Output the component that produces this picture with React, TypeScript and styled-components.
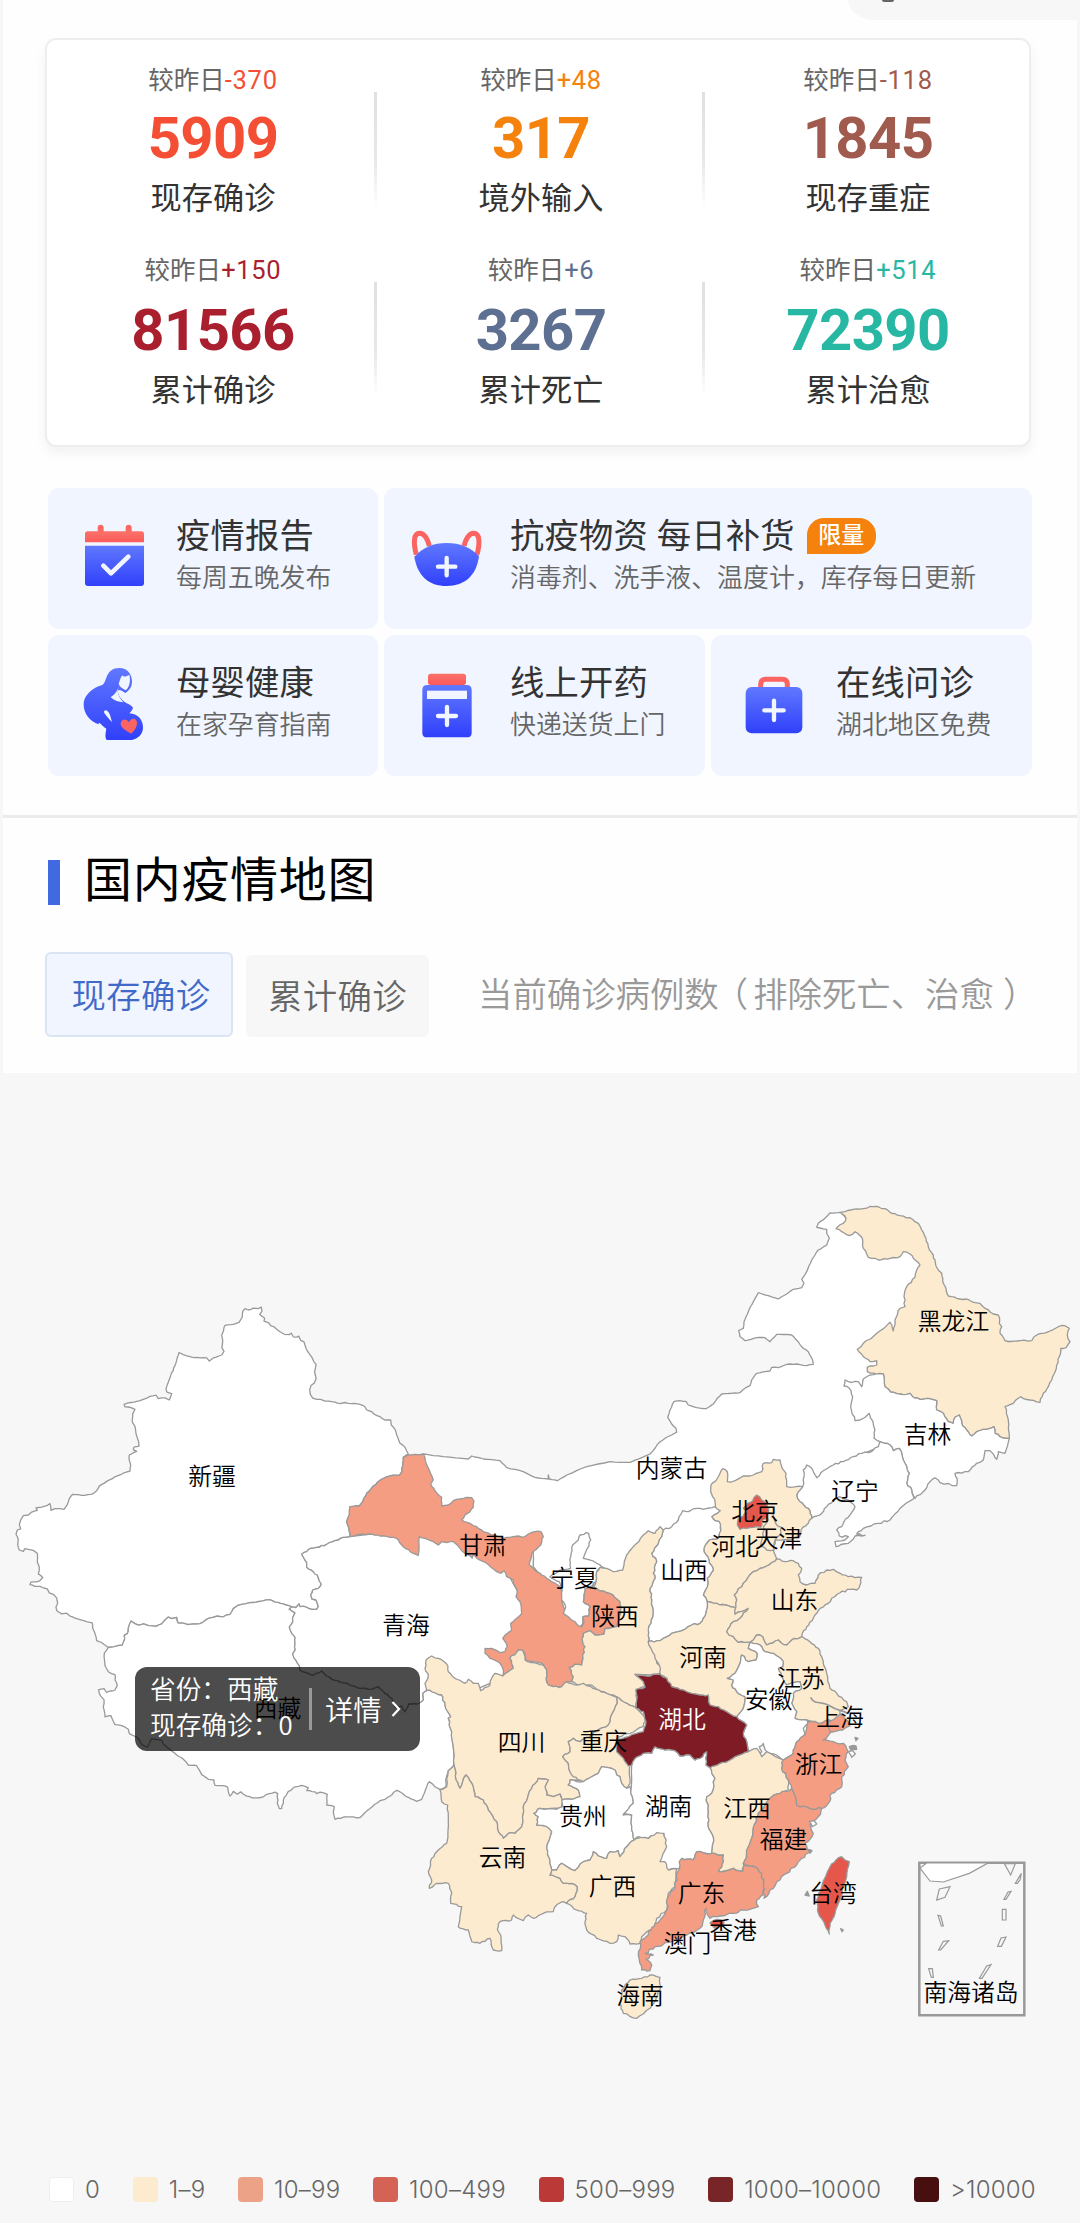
import React from 'react';
import styled, { createGlobalStyle } from 'styled-components';

const GlobalStyle = createGlobalStyle`
  * { box-sizing: border-box; }
  body {
    margin: 0;
    background: #f7f7f7;
    font-family: Roboto, "Noto Sans CJK SC", sans-serif;
    -webkit-font-smoothing: antialiased;
  }
`;

const Page = styled.main`
  width: 1080px;
  height: 2223px;
  overflow: hidden;
  display: flex;
  flex-direction: column;
  background: #f7f7f7;
`;

const Sheet = styled.section`
  margin: 0 3px;
  height: 1073px;
  background: #fefefe;
  display: flex;
  flex-direction: column;
`;

const TopBar = styled.div`
  height: 38px;
  display: flex;
  justify-content: flex-end;
  align-items: flex-start;
`;

const SharePill = styled.div`
  width: 229px;
  height: 20px;
  background: #f7f7f7;
  border-bottom-left-radius: 28px 20px;
  display: flex;
  padding-left: 34px;
`;

const ShareDot = styled.span`
  width: 12px;
  height: 2px;
  background: #666;
  border-radius: 0 0 6px 6px;
`;

const StatsCard = styled.div`
  margin: 0 46px 0 42px;
  width: 986px;
  height: 409px;
  border: 2px solid #eeeeee;
  border-radius: 11px;
  background: #fff;
  box-shadow: 0 6px 12px rgba(0, 0, 0, 0.05);
  padding: 22px 0 0 2px;
  display: flex;
  flex-direction: column;
`;

const StatsRow = styled.div<{ $gap: number }>`
  display: grid;
  grid-template-columns: 328px 328px 326px;
  height: 190px;
  --gap: ${(p) => p.$gap}px;
`;

const Stat = styled.div<{ $divider: boolean }>`
  display: flex;
  flex-direction: column;
  align-items: center;
  background: ${(p) =>
    p.$divider
      ? 'linear-gradient(#e0e0e0, #e8e8e8 60%, rgba(255,255,255,0)) right 30px / 3px 116px no-repeat'
      : 'none'};
`;

const StatDelta = styled.div<{ $color: string }>`
  height: 36px;
  line-height: 36px;
  font-size: 25.5px;
  color: #666;
  span { color: ${(p) => p.$color}; letter-spacing: 0.7px; }
`;

const StatNumber = styled.div<{ $color: string }>`
  height: 66px;
  line-height: 66px;
  margin-top: var(--gap);
  font-size: 58px;
  font-weight: 700;
  letter-spacing: -0.6px;
  color: ${(p) => p.$color};
`;

const StatName = styled.div`
  height: 44px;
  line-height: 44px;
  margin-top: 6px;
  font-size: 31.2px;
  color: #333;
`;

const Services = styled.div`
  margin: 41px 0 0 45px;
  width: 984px;
  display: flex;
  flex-direction: column;
  gap: 6px;
`;

const ServiceRow = styled.div<{ $columns: string }>`
  display: grid;
  grid-template-columns: ${(p) => p.$columns};
  gap: 6px;
`;

const Tile = styled.div<{ $inset: number; $gap: number }>`
  height: 141px;
  border-radius: 11px;
  background: #f0f5ff;
  display: flex;
  align-items: flex-start;
  gap: ${(p) => p.$gap}px;
  padding-left: ${(p) => p.$inset}px;
`;

const TileIcon = styled.svg`
  width: 72px;
  height: 72px;
  margin-top: 34px;
  overflow: visible;
  flex: none;
`;

const TileText = styled.div`
  padding-top: 25px;
  white-space: nowrap;
`;

const TileTitle = styled.div`
  height: 46px;
  display: flex;
  align-items: center;
  font-size: 34.3px;
  letter-spacing: 0.2px;
  line-height: 46px;
  color: #333;
`;

const Badge = styled.span`
  width: 69px;
  height: 36px;
  margin: -1px 0 0 12px;
  border-radius: 17px 17px 17px 0;
  background: #f5820c;
  color: #fff;
  font-size: 23px;
  font-weight: 500;
  letter-spacing: 0;
  line-height: 35px;
  text-align: center;
`;

const TileNote = styled.div`
  font-size: 25.9px;
  line-height: 38px;
  font-weight: 350;
  color: #666;
`;

const Rule = styled.div`
  margin-top: 39px;
  height: 3px;
  background: #ebebeb;
`;

const Heading = styled.h2`
  margin: 33px 0 0 45px;
  height: 60px;
  display: flex;
  align-items: center;
  gap: 24px;
  font-size: 48px;
  letter-spacing: 0.7px;
  font-weight: 400;
  line-height: 60px;
  color: #000;
  &::before {
    content: "";
    width: 12px;
    height: 45px;
    margin-top: 3px;
    background: #4169e1;
  }
`;

const Tabs = styled.div`
  margin: 41px 0 0 42px;
  height: 85px;
  display: flex;
  align-items: flex-end;
`;

const Tab = styled.button<{ $active?: boolean }>`
  width: ${(p) => (p.$active ? 188 : 183)}px;
  height: ${(p) => (p.$active ? 85 : 82)}px;
  margin-right: 13px;
  padding: ${(p) => (p.$active ? '0 0 3px 4px' : '0 0 5px')};
  border: ${(p) => (p.$active ? '2px solid #dbe4f3' : 'none')};
  border-radius: 6px;
  background: ${(p) => (p.$active ? '#f0f5ff' : '#f7f7f7')};
  color: ${(p) => (p.$active ? '#4169c8' : '#666')};
  font: inherit;
  font-weight: 350;
  font-size: 34.4px;
  letter-spacing: 0.3px;
`;

const TabNote = styled.div`
  margin-left: 36px;
  height: 85px;
  line-height: 87px;
  font-size: 34.4px;
  font-weight: 350;
  color: #999;
  white-space: nowrap;
`;

const Bracket = styled.span<{ $shift: number }>`
  margin-left: ${(p) => p.$shift}px;
  margin-right: ${(p) => -p.$shift}px;
`;

const MapArea = styled.section`
  height: 1087px;
  display: grid;
  > * { grid-area: 1 / 1; }
`;

const MapDrawing = styled.svg`
  width: 1080px;
  height: 1087px;
  display: block;
  text {
    font-family: "Noto Sans CJK SC", sans-serif;
    font-size: 23.8px;
    font-weight: 350;
    text-anchor: middle;
  }
`;

const Tooltip = styled.div`
  margin: 594px 0 0 135px;
  width: 285px;
  height: 84px;
  border-radius: 12px;
  background: rgba(0, 0, 0, 0.7);
  color: #fff;
  display: flex;
  align-items: center;
  padding-left: 15px;
  font-size: 25.7px;
  font-weight: 350;
  font-family: "Noto Sans CJK SC", sans-serif;
  white-space: nowrap;
`;

const TooltipLines = styled.div`
  width: 159px;
  line-height: 36px;
  padding-bottom: 6px;
`;

const TooltipLink = styled.div`
  height: 42px;
  line-height: 40px;
  display: flex;
  align-items: center;
  gap: 9px;
  padding-left: 13px;
  border-left: 3px solid #999;
  font-size: 28.3px;
`;

const Legend = styled.footer`
  height: 58px;
  padding: 0 44px 0 49px;
  display: flex;
  align-items: center;
  justify-content: space-between;
`;

const LegendItem = styled.div`
  display: flex;
  align-items: center;
  gap: 11px;
  font-family: Inter, sans-serif;
  font-size: 24px;
  font-weight: 300;
  letter-spacing: 0.25px;
  color: #666;
`;

const Swatch = styled.i<{ $color: string; $ring?: boolean }>`
  width: 25px;
  height: 25px;
  border-radius: 4px;
  background: ${(p) => p.$color};
  border: ${(p) => (p.$ring ? '1px solid #eeeeee' : 'none')};
`;

/* ---------- data ---------- */

const STATS = [
  [
    { delta: '-370', value: '5909', name: '现存确诊', color: '#f44f34' },
    { delta: '+48', value: '317', name: '境外输入', color: '#f5820c' },
    { delta: '-118', value: '1845', name: '现存重症', color: '#a05a4e' },
  ],
  [
    { delta: '+150', value: '81566', name: '累计确诊', color: '#aa1f2e' },
    { delta: '+6', value: '3267', name: '累计死亡', color: '#5d7092' },
    { delta: '+514', value: '72390', name: '累计治愈', color: '#28b7a3' },
  ],
];

const LEGEND = [
  { color: '#ffffff', label: '0' },
  { color: '#fcebcf', label: '1–9' },
  { color: '#eba287', label: '10–99' },
  { color: '#d56355', label: '100–499' },
  { color: '#bb3937', label: '500–999' },
  { color: '#772526', label: '1000–10000' },
  { color: '#480f10', label: '>10000' },
];

/* ---------- map geometry ---------- */

// Outlines are digitised on six overlapping tiles: [origin x, origin y, units per px in x, in y].
const TILES = {
  A: [0, 1280, 3, 2.8],
  B: [300, 1400, 3, 3],
  C: [600, 1180, 3, 3],
  D: [600, 1440, 3, 3],
  E: [380, 1640, 3, 3],
  F: [600, 1680, 3, 3],
} as const;
type TileKey = keyof typeof TILES;
type Segment = [TileKey, string];
type Point = [number, number];

const hash = (n: number) => {
  const s = Math.sin(n * 12.9898) * 43758.5453;
  return s - Math.floor(s) - 0.5;
};

// Roughen an edge symmetrically, so neighbours that share it get the same coastline.
const roughen = (a: Point, b: Point, amount: number): Point[] => {
  const len = Math.hypot(b[0] - a[0], b[1] - a[1]);
  if (len < 4 || len > 40) return [];
  const steps = Math.min(4, Math.floor(len / 2.6));
  const flip = a[0] > b[0] || (a[0] === b[0] && a[1] > b[1]);
  const [p, q] = flip ? [b, a] : [a, b];
  const nx = -(q[1] - p[1]) / len;
  const ny = (q[0] - p[0]) / len;
  const out: Point[] = [];
  for (let i = 1; i < steps; i++) {
    const t = i / steps;
    const d = hash(Math.round(p[0] * 3 + q[1] * 7 + i * 31)) * amount;
    out.push([p[0] + (q[0] - p[0]) * t + nx * d, p[1] + (q[1] - p[1]) * t + ny * d]);
  }
  return flip ? out.reverse() : out;
};

const outline = (segments: Segment[], amount = 1.8): string => {
  const pts: Point[] = [];
  segments.forEach(([key, text]) => {
    const [ox, oy, sx, sy] = TILES[key];
    const n = text.trim().split(/\s+/).map(Number);
    for (let i = 0; i + 1 < n.length; i += 2) pts.push([ox + n[i] / sx, oy + n[i + 1] / sy]);
  });
  const all: Point[] = [];
  pts.forEach((p, i) => {
    all.push(p, ...roughen(p, pts[(i + 1) % pts.length], amount));
  });
  return 'M' + all.map(([x, y]) => `${x.toFixed(1)} ${y.toFixed(1)}`).join('L') + 'Z';
};

const NONE = '#ffffff';
const FEW = '#fcebcf';
const SOME = '#f59d82';
const MANY = '#e5574b';
const MOST = '#7f1b24';

const PROVINCES: { fill: string; rough?: number; shape: Segment[] }[] = [
  // 新疆
  { fill: NONE, rough: 0.7, shape: [
    ['A', '728 88 735 80 745 84 760 79 775 80 784 76 786 87 779 97 788 103 794 107 792 115 806 120 812 128 822 131 830 138 840 145 853 152 868 153 874 149 880 159 891 160 896 157 902 169 912 173 914 180 918 191 926 204 936 217 942 230 948 236 944 255 948 277 943 288 933 295 929 307 931 320 938 331 950 334 962 334 975 339 1005 342 1020 346 1035 343 1055 346 1080 348'],
    ['B', '195 20 200 30 215 35 222 42 240 50 255 60 272 60 274 75 285 88 290 105 300 130 315 142 325 162 310 172 308 190 306 215 298 226 270 228 245 238 220 258 200 280 188 305 178 318 150 320 148 345 140 365 147 385 150 410 130 412 105 422 80 433 50 442 32 445 20 455 5 463 12 475 20 488 20 502 40 515 52 525 58 543 64 552 55 565 38 570 32 585 36 597 48 600 55 620 50 628 35 628 20 622 0 620'],
    ['A', '897 907 888 917 875 915 850 907 825 902 808 895 785 899 760 903 735 907 712 912 700 920 690 936 670 943 650 941 630 946 600 962 570 964 535 961 530 945 515 948 505 944 495 952 485 963 468 970 445 968 430 963 420 966 405 962 393 955 385 975 382 990 373 995 374 1005 366 1023 340 1027 325 1029 318 1024 305 1015 290 1010 285 990 278 975 277 960 262 957 240 951 225 947 210 941 200 933 185 935 170 925 168 915 173 905 170 890 160 880 148 876 142 865 120 858 105 858 90 853 93 846 110 845 120 842 128 833 115 823 118 805 112 790 112 765 100 757 85 754 75 752 70 760 58 756 53 740 55 728 48 712 52 700 62 697 58 685 62 672 70 660 85 658 95 650 112 645 108 638 125 636 140 632 150 626 153 645 165 640 180 640 192 642 200 632 208 612 218 600 235 601 255 603 280 598 290 590 298 577 320 564 345 551 370 541 390 535 392 520 388 505 388 490 410 480 400 475 402 468 417 465 415 450 408 430 405 410 397 398 398 375 405 362 395 358 375 355 372 348 385 344 410 340 430 334 450 326 468 322 475 332 495 330 508 336 515 318 500 313 498 305 512 268 525 240 530 225 537 203 550 209 575 216 600 218 620 218 628 227 640 218 665 210 672 200 666 190 668 172 665 155 675 127 700 124 718 118 727 103'],
  ] },
  // 西藏
  { fill: NONE, rough: 1.2, shape: [
    ['A', '325 1029 340 1027 366 1023 374 1005 373 995 382 990 385 975 393 955 405 962 420 966 430 963 445 968 468 970 485 963 495 952 505 944 515 948 530 945 535 961 570 964 600 962 630 946 650 941 670 943 690 936 700 920 712 912 735 907 760 903 785 899 808 895 825 902 850 907 875 915 868 922 885 932 878 945 878 958 868 972 876 990 885 1000 885 1020 886 1035 878 1047 888 1065 898 1080'],
    ['B', '0 810 25 820 38 826 65 813 80 828 95 838 130 848 150 855 180 865 205 868 235 860 255 880 275 895 285 920 305 918 315 935 325 912 350 912 370 900 368 880 385 870'],
    ['E', '165 158 185 165 195 195 212 230 205 235 215 275 220 320 222 375 205 392 200 408 198 440 180 448 165 440 148 425 140 440 133 460 125 478 110 484 85 472 50 451 35 465 15 478 0 482'],
    ['A', '1110 1480 1080 1505 1040 1503 1005 1510 1000 1490 1003 1475 980 1470 982 1440 960 1434 950 1438 945 1433 920 1430 925 1422 905 1415 885 1419 865 1432 852 1450 845 1480 838 1480 832 1465 833 1438 825 1434 800 1440 790 1447 765 1450 740 1445 722 1433 712 1440 700 1432 690 1445 683 1420 665 1416 645 1415 642 1400 625 1398 605 1385 590 1360 565 1358 550 1342 530 1330 510 1315 490 1300 485 1288 455 1285 442 1308 430 1303 410 1280 388 1270 385 1258 365 1248 345 1245 333 1220 315 1223 310 1195 312 1175 302 1165 296 1147 312 1144 320 1155 345 1148 352 1135 345 1120 345 1105 325 1097 315 1080 313 1045'],
  ] },
  // 内蒙古
  { fill: NONE, rough: 0.6, shape: [
    ['B', '370 162 430 170 505 177 515 168 550 177 600 182 620 203 670 215 705 232 745 237 745 225 748 237 772 242 800 225 860 200 930 185 990 187 1020 175 1050 162 1080 125'],
    ['C', '195 775 215 765 230 757 228 745 215 732 203 712 210 690 222 665 240 662 258 664 265 675 290 683 318 686 340 672 352 655 365 642 395 640 420 638 435 625 450 617 455 600 470 580 495 575 510 573 515 562 535 563 560 553 590 552 620 557 640 553 638 540 625 515 605 500 595 485 575 465 560 463 530 463 510 485 495 473 470 473 435 482 420 470 416 452 430 445 432 425 445 395 460 365 475 338 505 347 535 357 555 345 580 328 605 323 612 310 605 298 620 275 635 240 655 210 680 195 688 175 680 160 680 148 650 142 655 130 675 115 690 99 722 97 738 115 780 140 850 200 930 190 985 250 985 330 940 420 880 500 850 560 850 640 850 760 840 800 700 860 620 960 345 1000 190 1070 130 1110'],
    ['B', '1000 480 970 515 935 515 905 500 850 620 780 600 700 500 700 450 600 440 450 360 350 200'],
  ] },
  // 青海
  { fill: NONE, shape: [
    ['B', '150 410 130 412 105 422 80 433 50 442 32 445 20 455 5 463 12 475 20 488 20 502 40 515 52 525 58 543 64 552 55 565 38 570 32 585 36 597 48 600 55 620 50 628 35 628 20 622 0 620'],
    ['A', '897 907 888 917 875 915 868 922 885 932 878 945 878 958 868 972 876 990 885 1000 885 1020 886 1035 878 1047 888 1065 898 1080'],
    ['B', '0 810 25 820 38 826 65 813 80 828 95 838 130 848 150 855 180 865 205 868 235 860 255 880 275 895 285 920 305 918 315 935 325 912 350 912 370 900 368 880 385 870 500 880 640 820 690 640 600 480 400 380'],
  ] },
  // 甘肃
  { fill: SOME, rough: 1.2, shape: [
    ['B', '325 165 345 163 370 162 383 200 400 240 392 252 405 272 425 292 425 318 445 315 460 302 480 297 500 292 515 293 522 303 520 322 510 335 495 345 485 360 510 370 530 380 550 395 580 405 610 415 640 410 655 408 670 412 685 402 705 395 723 395 730 410 722 435 695 462 688 495 700 505 725 525 740 535 755 545 780 560 790 590 785 605 797 635 820 660 845 680 852 665 848 650 865 648 870 620 850 605 855 565 875 558 900 572 930 580 960 605 962 640 950 680 935 683 915 685 912 702 885 705 870 692 850 700 848 725 855 740 848 765 845 795 825 793 808 803 820 830 815 845 800 845 785 860 760 860 745 855 738 835 740 810 725 790 700 785 678 782 672 755 655 750 630 775 640 805 608 828 610 810 600 790 570 775 555 760 555 745 575 745 600 758 615 755 622 740 608 715 635 690 632 670 650 655 665 640 660 605 648 590 652 570 640 550 640 540 620 530 612 512 603 520 590 515 560 490 530 475 520 463 517 474 495 460 480 445 460 425 440 428 425 425 415 435 400 425 375 415 358 410 355 466 340 460 310 440 290 415 270 412 240 408 215 402 180 403 150 410 147 385 140 365 148 345 150 320 178 318 188 305 200 280 220 258 245 238 270 228 298 226 306 215 308 190 310 172'],
  ] },
  // 宁夏
  { fill: NONE, shape: [
    ['B', '840 405 852 403 858 398 866 400 872 420 862 445 850 475 870 480 890 490 905 500 890 515 888 545 870 560 855 565 850 605 870 620 865 648 848 650 848 672 840 680 825 665 805 650 790 640 797 620 785 600 787 570 778 545 755 535 750 530 780 510 812 505 812 470 818 435 835 420'],
  ] },
  // 黑龙江
  { fill: FEW, shape: [
    ['C', '735 95 760 88 790 86 820 80 855 86 870 97 900 107 930 113 945 125 955 130 965 150 978 175 985 200 1000 225 1005 240 1012 265 1025 280 1028 305 1038 325 1045 348 1070 355 1100 357 1125 368 1140 370 1155 385 1180 402 1195 405 1198 430 1205 440 1200 460 1215 482 1250 483 1295 482 1302 470 1325 460 1350 453 1375 440 1395 437 1408 445 1402 465 1410 485 1398 503 1382 505 1378 530 1370 555 1355 600 1345 620 1330 640 1320 667 1290 660 1262 650 1240 670 1215 680 1225 720 1228 775 1200 770 1185 760 1182 740 1160 748 1130 755 1115 768 1100 750 1085 730 1078 705 1065 712 1060 730 1045 725 1030 700 1010 690 1010 662 985 655 960 658 938 650 930 640 900 642 872 636 855 620 850 582 830 585 802 575 802 562 830 555 830 542 810 545 790 530 772 508 790 490 830 460 870 427 880 453 885 420 900 385 915 380 912 350 920 320 945 292 950 270 960 255 940 235 930 222 910 215 900 230 870 235 835 240 805 232 790 205 785 172 765 155 748 167 725 155 708 146 730 130 738 115 722 97'],
  ] },
  // 吉林
  { fill: NONE, shape: [
    ['C', '735 600 745 605 775 605 785 620 790 597 810 585 850 582 855 620 872 636 900 642 930 640 938 650 960 658 985 655 1010 662 1010 690 1030 700 1045 725 1060 730 1065 712 1078 705 1085 730 1100 750 1115 768 1130 755 1160 748 1182 740 1185 760 1200 770 1228 775 1215 820 1195 815 1190 838 1170 812 1155 812 1150 840 1130 850 1105 875 1065 880 1072 905 1070 917 1020 908 1005 893 990 905 975 930 945 955 935 930 920 910 928 880 915 850 898 805 880 812 870 795 840 785 822 775 825 750 808 700 780 720 765 722 752 680 758 650 748 625 732 618'],
  ] },
  // 辽宁
  { fill: NONE, shape: [
    ['C', '840 785 870 795 880 812 898 805 915 850 928 880 920 910 935 930 943 955 900 985 870 1020 835 1030 790 1045 770 1062 795 1066 765 1068 745 1090 730 1092 708 1100 705 1085 735 1080 745 1070 718 1068 710 1050 725 1040 732 1025 750 1005 765 980 745 960 720 950 700 960 680 980 665 1000 635 1015 625 985 600 965 590 945 608 920 612 890 610 870 620 855 635 865 650 893 670 872 700 855 730 845 760 830 785 820 815 815 835 800'],
  ] },
  // 河北
  { fill: FEW, shape: [
    ['C', '635 1015 625 985 600 965 590 945 608 920 560 920 558 880 545 860 540 840 520 838 515 848 490 850 485 875 460 885 430 888 405 902 382 905 382 875 368 866 355 890 345 905 333 915 332 935 345 965 345 985 360 992 335 1010 345 1022 358 1025 362 1050 355 1075 328 1080 318 1092 312 1115'],
    ['D', '327 360 340 390 322 415 322 440 310 465 322 485 350 490 385 497 408 505 410 480 403 465 430 430 460 395 500 378 530 357 520 330 525 300 565 300 600 288 608 262 625 250'],
  ] },
  // 天津
  { fill: FEW, shape: [['D', '490 260 505 240 505 215 520 222 530 255 545 262 540 285 525 300 522 330 500 330 482 315 490 290']] },
  // 北京
  { fill: MANY, shape: [['D', '470 165 485 180 500 190 505 215 500 235 485 245 482 262 460 262 440 265 420 268 412 255 415 235 430 228 440 215 430 205 440 190 458 182']] },
  // 山西
  { fill: NONE, shape: [
    ['D', '345 200 310 208 290 205 265 215 248 212 235 240 215 260 190 270 185 290 175 310 155 340 170 365 160 400 165 415 150 445 155 480 158 530 145 570 145 605 180 602 215 580 235 575 275 555 300 550 318 520 322 485 310 465 322 440 322 415 340 390 327 360 312 335 318 312 328 300 355 295 362 272 358 245 345 242 335 230 360 212'],
  ] },
  // 陕西
  { fill: FEW, shape: [
    ['D', '190 270 180 260 165 280 145 272 130 285 100 320 80 345 72 375 68 390 40 395 20 385 0 382'],
    ['B', '890 515 888 545 880 560 900 572 930 580 960 605 962 640 950 680 935 683 915 685 912 702 885 705 870 692 850 700 848 725 855 740 848 765 845 795 825 793 808 803 820 830 815 845 840 858 870 855 890 868 930 885'],
    ['E', '710 170 740 190 768 203 770 175 768 150 795 140 795 120 765 103 810 105 840 100 850 80 830 70 825 35 810 20'],
    ['D', '145 605 145 570 158 530 155 480 150 445 165 415 160 400 170 365 155 340 175 310 185 290'],
  ] },
  // 河南
  { fill: FEW, shape: [
    ['D', '145 605 155 630 165 655 180 680 182 705 200 715 215 740 250 750 300 765 325 765 330 795 355 800 380 815 410 830 430 805 435 770 410 755 395 735 400 720 382 715 405 700 420 670 425 645 445 665 468 660 472 640 445 625 450 607 415 607 380 575 400 545 420 535 445 505 405 522 408 505 385 497 350 490 322 485 318 520 300 550 275 555 235 575 215 580 180 602'],
  ] },
  // 山东
  { fill: FEW, shape: [
    ['D', '530 357 555 365 580 362 595 370 605 385 595 405 600 425 620 435 645 430 655 405 680 390 700 388 720 400 745 410 785 412 780 435 770 450 750 448 720 458 695 475 685 490 660 505 650 520 640 535 620 560 607 580 605 590 575 600 560 615 545 610 535 600 500 615 488 590 470 585 460 600 450 607 415 607 380 575 400 545 420 535 445 505 405 522 410 480 403 465 430 430 460 395 500 378'],
  ] },
  // 江苏
  { fill: FEW, shape: [
    ['D', '607 590 630 605 655 625 665 650 680 700 690 745 710 760 740 785 745 800 720 812 720 835 700 840 680 850 645 850 620 840 585 835 590 815 575 790 580 760 605 745 600 725 560 735 545 710 535 685 548 680 550 665 535 650 520 640 495 635 480 615 450 607 460 600 470 585 488 590 500 615 535 600 545 610 560 615 575 600 605 590'],
  ] },
  // 安徽
  { fill: NONE, shape: [
    ['D', '450 607 480 615 495 635 520 640 535 650 550 665 548 680 535 685 545 710 560 735 600 725 605 745 580 760 575 790 590 815 585 835 620 840 625 850 610 865 615 880 590 905 580 940 550 960 530 945 500 935 490 910 478 920 485 935 475 945 445 930 440 905 430 880 440 855 410 830 430 805 435 770 410 755 395 735 400 720 382 715 405 700 420 670 425 645 445 665 468 660 472 640 445 625'],
  ] },
  // 四川
  { fill: FEW, shape: [
    ['E', '140 150 135 130 145 110 135 85 138 60 155 48 175 55 200 72 205 95 225 115 255 130 265 118 280 130 295 130 302 152 330 135 335 115 345 100 368 108 400 85 390 55 415 30 428 30 435 60 460 68 490 75 500 90 498 115 505 135 520 140 545 140 560 125 590 135 610 130 650 148 680 160 710 172 712 190 700 215 685 255 650 272 635 285 600 305 580 295 565 305 570 335 548 350 565 370 570 395 605 420 570 420 565 435 595 450 600 470 575 478 545 480 540 462 520 470 500 465 495 440 505 420 475 415 455 445 445 465 430 500 425 560 405 580 385 580 370 595 355 575 350 545 325 510 310 480 285 470 280 440 258 405 240 445 228 420 222 375 220 320 215 275 205 235 212 230 195 195 185 165 165 158'],
  ] },
  // 重庆
  { fill: FEW, shape: [
    ['E', '710 170 740 190 768 203 795 235 790 260 750 280 715 290 735 345 750 375 750 430 740 445 725 430 720 410 710 405 705 390 665 380 655 400 635 410 610 425 580 410 570 395 565 370 548 350 570 335 565 305 580 295 600 305 635 285 650 272 685 255 700 215 712 190'],
  ] },
  // 云南
  { fill: FEW, shape: [
    ['E', '222 375 205 392 200 440 180 450 185 485 203 495 205 540 200 610 175 630 155 655 145 695 155 720 148 745 170 730 205 730 215 760 212 790 245 800 235 860 265 870 275 905 300 910 330 895 340 930 365 932 362 885 352 868 360 845 395 840 400 825 430 842 445 825 460 835 490 820 520 815 525 800 550 785 560 790 585 770 592 740 575 730 550 730 540 715 510 705 515 690 510 660 500 625 515 575 500 560 470 555 475 530 462 520 480 505 545 505 548 485 540 462 520 470 500 465 495 440 505 420 475 415 455 445 445 465 430 500 425 560 405 580 385 580 370 595 355 575 350 545 325 510 310 480 285 470 280 440 258 405 240 445 228 420'],
  ] },
  // 贵州
  { fill: NONE, shape: [
    ['E', '545 480 575 478 600 470 595 450 565 435 570 420 610 425 635 410 655 400 665 380 705 390 710 405 720 410 725 430 740 445 750 440 752 460 760 490 730 525 755 525 755 570 762 600 740 620 720 650 715 632 690 635 680 655 655 648 640 635 630 660 605 668 585 692 545 670 530 690 515 690 510 660 500 625 515 575 500 560 470 555 475 530 462 520 480 505 530 508 548 500'],
  ] },
  // 广西
  { fill: FEW, shape: [
    ['E', '515 690 530 690 545 670 585 692 605 668 630 660 640 635 655 648 680 655 690 635 715 632 720 650 740 620 762 600 785 590 805 595 830 575 850 578 865 620 845 660 865 670 868 690 890 685 885 740 865 760 860 810 830 835 825 860 800 875 785 890 780 910 750 912 735 890 715 885 710 905 690 910 650 895 620 870 615 845 620 820 590 810 560 790 585 770 592 740 575 730 550 730 540 715 510 705'],
  ] },
  // 湖南
  { fill: NONE, shape: [
    ['F', '95 255 105 235 130 220 155 220 165 200 195 210 225 212 240 228 270 225 285 240 300 235 320 215 318 255 330 263 345 295 335 340 320 350 325 400 325 440 340 470 335 520 290 515 280 540 245 535 238 565 205 570 195 545 180 545 200 500 192 460 170 458 145 475 115 470 102 480 95 450 95 405 70 403 100 370 92 340'],
  ] },
  // 江西
  { fill: FEW, shape: [
    ['F', '330 263 360 250 390 240 405 230 445 215 470 205 485 230 500 215 550 240 545 265 565 300 565 330 540 340 515 350 475 400 465 430 455 475 430 550 428 575 400 565 355 575 370 545 370 525 335 520 340 470 325 440 325 400 320 350 335 340 345 295'],
  ] },
  // 湖北
  { fill: MOST, shape: [
    ['D', '105 703 140 708 180 703 200 715 215 740 250 750 300 765 325 765 330 795 355 800 380 815 410 830 440 855 430 880 440 905 445 935'],
    ['F', '405 230 390 240 360 250 330 263 318 255 320 215 300 235 285 240 270 225 240 228 225 212 195 210 165 200 155 220 130 220 105 235 95 255 85 258 70 235 60 225 50 215 50 185 85 170 130 155 138 125 130 95 108 85 110 60 108 28 135 22 130 5'],
  ] },
  // 广东
  { fill: SOME, rough: 2.6, shape: [
    ['F', '245 535 280 540 290 515 335 520 370 525 370 545 355 575 400 565 428 575 432 555 465 560 485 580 492 625 490 645 470 660 475 680 430 690 400 700 350 710 330 715 318 685 310 720 300 745 260 765 230 780 165 800 135 820 160 825 138 838 155 855 150 872 125 870 115 825 120 785 145 765 145 755 165 730 180 720 200 690 205 650 225 620 230 580'],
  ] },
  // 福建
  { fill: SOME, rough: 2.6, shape: [
    ['F', '540 340 575 325 590 375 630 385 665 385 655 410 630 435 640 460 615 490 630 515 605 535 590 555 560 580 540 600 510 630 492 655 490 620 485 580 465 560 430 550 455 475 465 430 475 400 515 350'],
  ] },
  // 浙江
  { fill: SOME, rough: 2.4, shape: [
    ['F', '550 240 580 220 590 185 615 165 625 125 665 130 690 120 700 150 670 180 700 185 730 190 745 215 735 240 745 260 725 290 725 320 695 340 685 370 665 385 630 385 590 375 575 325 565 300 545 265'],
  ] },
  // 上海
  { fill: SOME, shape: [['F', '702 118 720 103 745 125 750 138 728 150 690 155 680 135']] },
  // 香港
  { fill: MANY, shape: [['F', '330 728 350 718 372 725 365 740 345 745']] },
  // 台湾
  { fill: MANY, shape: [['F', '725 530 735 540 748 545 740 590 720 660 705 700 690 730 688 762 675 735 655 700 650 660 665 620 690 560 708 540']] },
  // 海南
  { fill: FEW, shape: [['E', '785 1015 810 1005 840 1012 842 1040 830 1070 810 1105 770 1135 730 1120 720 1090 725 1050 750 1020']] },
  // 沿海岛屿
  { fill: '#999', shape: [['F', '748 200 768 198 770 208 752 210']] },
  { fill: NONE, shape: [['F', '745 215 758 212 766 222 755 232']] },
  { fill: '#999', shape: [['F', '765 172 774 175 768 182']] },
  { fill: '#999', shape: [['F', '615 645 622 634 628 648']] },
  { fill: '#999', shape: [['F', '722 746 730 750 726 755']] },
  { fill: NONE, shape: [['F', '628 425 642 422 650 432 636 440']] },
  { fill: '#999', shape: [['F', '626 508 636 512 630 520']] },
];

const ISLETS = [
  '1018 627 1050 620 1035 652 1010 660',
  '1014 706 1022 708 1030 738 1024 738',
  '1030 784 1046 782 1022 810 1016 810',
  '986 866 997 866 1000 892 994 892',
  '1246 610 1264 580 1260 600 1252 610',
  '1212 658 1224 636 1233 634 1218 658',
  '1207 688 1218 688 1218 720 1207 720',
  '1203 774 1218 771 1204 799 1193 799',
  '1160 858 1173 854 1146 895 1138 895',
  '1213 551 1246 551 1232 585',
];

const LABELS: [string, number, number][] = [
  ['新疆', 212, 1476], ['黑龙江', 953.5, 1320.5], ['吉林', 927.5, 1434], ['辽宁', 855, 1491],
  ['内蒙古', 671.5, 1468], ['北京', 755, 1511], ['天津', 778.5, 1538], ['河北', 735, 1546],
  ['山西', 684, 1570], ['山东', 794.5, 1600], ['陕西', 615, 1616], ['宁夏', 574, 1577.5],
  ['甘肃', 483, 1544.5], ['青海', 406, 1625], ['西藏', 277.5, 1708], ['河南', 703, 1656.5],
  ['江苏', 801, 1678], ['安徽', 768.5, 1698.5], ['上海', 840, 1716.5], ['湖北', 682, 1718.5],
  ['四川', 521.5, 1742], ['重庆', 603.5, 1741], ['贵州', 583, 1816], ['云南', 502.5, 1856.5],
  ['广西', 612.5, 1886], ['湖南', 668.5, 1806], ['江西', 747, 1807.5], ['福建', 783.5, 1839],
  ['浙江', 818.5, 1764], ['台湾', 833, 1893], ['广东', 701.5, 1893], ['香港', 733, 1930],
  ['澳门', 687.5, 1943], ['海南', 640, 1994.5], ['南海诸岛', 971, 1992],
];

/* ---------- pieces ---------- */

const Gradients = () => (
  <defs>
    <linearGradient id="blue" x1="0" y1="0" x2="0" y2="1">
      <stop offset="0" stopColor="#6078ff" />
      <stop offset="1" stopColor="#3040fb" />
    </linearGradient>
    <linearGradient id="coral" x1="0" y1="0" x2="0" y2="1">
      <stop offset="0" stopColor="#fb7268" />
      <stop offset="1" stopColor="#fb5a5c" />
    </linearGradient>
  </defs>
);

const Plus = ({ x, y, r = 27 }: { x: number; y: number; r?: number }) => (
  <path d={`M${x - r} ${y}H${x + r}M${x} ${y - r}V${y + r}`} stroke="#f0f5ff" strokeWidth="13" strokeLinecap="round" />
);

const CalendarIcon = () => (
  <TileIcon viewBox="24 36 216 216" fill="none">
    <Gradients />
    <path d="M92 53V72M176 53V72" stroke="#fb6a62" strokeWidth="18" strokeLinecap="round" />
    <path d="M45 97V72q0-8 8-8H214q8 0 8 8V97Z" fill="url(#coral)" />
    <path d="M45 107H222V219q0 9-9 9H54q-9 0-9-9Z" fill="url(#blue)" />
    <path d="M100 167 123 190 175 140" stroke="#f0f5ff" strokeWidth="14" strokeLinecap="round" strokeLinejoin="round" />
  </TileIcon>
);

const MaskIcon = () => (
  <TileIcon viewBox="1020 36 216 216" fill="none">
    <path d="M1039 134C1030 100 1030 70 1049 70C1064 70 1074 90 1078 108M1221 134C1230 100 1230 70 1211 70C1196 70 1186 90 1182 108" stroke="#fb6461" strokeWidth="15" />
    <path d="M1033 140C1060 112 1090 99 1130 99S1200 112 1227 138C1220 195 1185 228 1130 228S1042 196 1033 140Z" fill="url(#blue)" />
    <Plus x={1130} y={170} r={26} />
  </TileIcon>
);

const MotherIcon = () => (
  <TileIcon viewBox="24 477 216 216" fill="none">
    <path
      d="M148 474C172 474 186 492 186 514C186 530 178 542 166 549C158 544 148 536 144 542C142 552 152 566 164 576C174 582 186 586 189 594C187 600 182 606 178 610C206 612 220 632 219 654C218 674 204 686 186 690H110C104 680 107 668 109 656C102 652 96 646 90 640C88 636 86 640 86 643C60 634 41 610 41 584C42 548 78 530 98 524C112 514 106 474 148 474Z"
      fill="url(#blue)"
    />
    <path d="M146 522C150 512 152 500 157 496C160 502 170 500 178 494C182 510 180 530 167 541C158 536 150 532 146 522Z" fill="#f0f5ff" />
    <path d="M146 528C144 540 136 552 122 562C134 572 146 576 160 577C150 566 143 554 143 544Z" fill="#f0f5ff" />
    <path d="M105 601C113 600 118 608 121 618C122 624 125 630 126 636C116 626 106 614 101 606Z" fill="#f0f5ff" />
    <path d="M184 671C166 662 151 652 152 640C154 626 170 624 177 637C184 622 200 624 201 638C201 652 192 662 184 671Z" fill="#fb6461" />
  </TileIcon>
);

const BottleIcon = () => (
  <TileIcon viewBox="1020 477 216 216" fill="none">
    <path d="M1057 540q0-15 15-15H1190q15 0 15 15V668q0 14-14 14H1071q-14 0-14-14Z" fill="url(#blue)" />
    <rect x="1074" y="491" width="114" height="34" rx="8" fill="url(#coral)" />
    <rect x="1071" y="542" width="120" height="25" fill="#f0f5ff" />
    <Plus x={1131} y={618} />
  </TileIcon>
);

const KitIcon = () => (
  <TileIcon viewBox="9 492 216 216" fill="none">
    <path d="M77 552V538q0-15 15-15H142q15 0 15 15V552" stroke="#fb6461" strokeWidth="15" />
    <rect x="32" y="546" width="170" height="139" rx="18" fill="url(#blue)" />
    <Plus x={117} y={616} r={29} />
  </TileIcon>
);

const ChinaMap = () => (
  <MapDrawing viewBox="0 1073 1080 1087">
    <g stroke="#999" strokeWidth="1.3" strokeLinejoin="round">
      {PROVINCES.map((p, i) => (
        <path key={i} d={outline(p.shape, p.rough)} fill={p.fill} />
      ))}
    </g>
    <g transform="translate(600 1680) scale(0.33333)" stroke="#999" fill="none">
      <path d="M632 52C640 75 665 62 690 78S722 88 742 100" strokeWidth="5" />
      <path d="M958 548H1273V1006H958Z" strokeWidth="7.5" />
      <path d="M960 564 980 549H1164L1108 580 1030 606 990 603Z" fill="#fff" strokeWidth="3.6" />
      {ISLETS.map((d) => (
        <path key={d} d={`M${d}Z`} strokeWidth="3.6" />
      ))}
    </g>
    {LABELS.map(([name, x, y]) => (
      <text key={name} x={x} y={y + 9} fill={name === '湖北' ? '#fff' : '#000'}>
        {name}
      </text>
    ))}
  </MapDrawing>
);

export default function App() {
  return (
    <Page>
      <GlobalStyle />
      <Sheet>
        <TopBar>
          <SharePill>
            <ShareDot />
          </SharePill>
        </TopBar>

        <StatsCard>
          {STATS.map((row, r) => (
            <StatsRow key={r} $gap={r === 0 ? 7 : 9}>
              {row.map((s, i) => (
                <Stat key={s.value} $divider={i < 2}>
                  <StatDelta $color={s.color}>
                    较昨日<span>{s.delta}</span>
                  </StatDelta>
                  <StatNumber $color={s.color}>{s.value}</StatNumber>
                  <StatName>{s.name}</StatName>
                </Stat>
              ))}
            </StatsRow>
          ))}
        </StatsCard>

        <Services>
          <ServiceRow $columns="330px 1fr">
            <Tile $inset={30} $gap={26}>
              <CalendarIcon />
              <TileText>
                <TileTitle>疫情报告</TileTitle>
                <TileNote>每周五晚发布</TileNote>
              </TileText>
            </Tile>
            <Tile $inset={26} $gap={28}>
              <MaskIcon />
              <TileText>
                <TileTitle>
                  抗疫物资 每日补货<Badge>限量</Badge>
                </TileTitle>
                <TileNote>消毒剂、洗手液、温度计，库存每日更新</TileNote>
              </TileText>
            </Tile>
          </ServiceRow>
          <ServiceRow $columns="330px 1fr 1fr">
            <Tile $inset={30} $gap={26}>
              <MotherIcon />
              <TileText>
                <TileTitle>母婴健康</TileTitle>
                <TileNote>在家孕育指南</TileNote>
              </TileText>
            </Tile>
            <Tile $inset={26} $gap={28}>
              <BottleIcon />
              <TileText>
                <TileTitle>线上开药</TileTitle>
                <TileNote>快递送货上门</TileNote>
              </TileText>
            </Tile>
            <Tile $inset={27} $gap={26}>
              <KitIcon />
              <TileText>
                <TileTitle>在线问诊</TileTitle>
                <TileNote>湖北地区免费</TileNote>
              </TileText>
            </Tile>
          </ServiceRow>
        </Services>

        <Rule />
        <Heading>国内疫情地图</Heading>
        <Tabs>
          <Tab $active>现存确诊</Tab>
          <Tab>累计确诊</Tab>
          <TabNote>
            当前确诊病例数<Bracket $shift={-5}>（</Bracket>排除死亡、治愈<Bracket $shift={9}>）</Bracket>
          </TabNote>
        </Tabs>
      </Sheet>

      <MapArea>
        <ChinaMap />
        <Tooltip>
          <TooltipLines>
            省份：西藏
            <br />
            现存确诊：0
          </TooltipLines>
          <TooltipLink>
            详情
            <svg width="10" height="16" viewBox="0 0 10 16" fill="none">
              <path d="M1.5 1 8 8 1.5 15" stroke="#fff" strokeWidth="2.2" />
            </svg>
          </TooltipLink>
        </Tooltip>
      </MapArea>

      <Legend>
        {LEGEND.map((l, i) => (
          <LegendItem key={l.label}>
            <Swatch $color={l.color} $ring={i === 0} />
            {l.label}
          </LegendItem>
        ))}
      </Legend>
    </Page>
  );
}
